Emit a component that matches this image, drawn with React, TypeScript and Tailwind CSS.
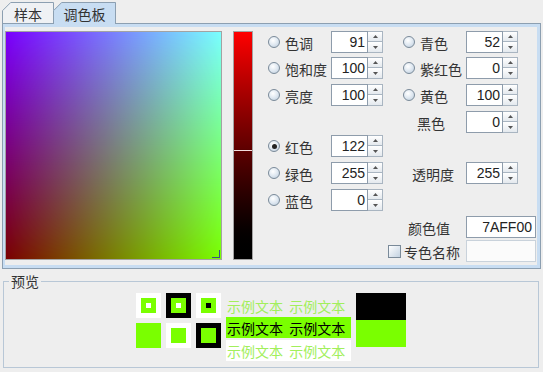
import React from 'react';

function Tab({ label, selected }: { label: string; selected?: boolean }) {
  const w = selected ? 63 : 52;
  const h = selected ? 22 : 21;
  const fill = `M0,${h} L0,8.5 L8.5,0 L${w},0 L${w},${h}Z`;
  const stroke = `M0.5,${h} L0.5,8.7 L8.7,0.5 L${w - 0.5},0.5 L${w - 0.5},${h}`;
  return (
    <div
      className={
        selected
          ? 'relative z-10 -ml-px -mb-px h-[22px] w-[63px] flex items-center justify-center pt-[2px]'
          : 'relative h-[21px] w-[52px] flex items-center justify-center pt-[2px]'
      }
    >
      <svg className="absolute inset-0" width={w} height={h}>
        <path d={fill} fill={selected ? '#c8ddf2' : '#eff1f4'} />
        <path d={stroke} fill="none" stroke="#8c9fb1" />
      </svg>
      <span className="relative">{label}</span>
    </div>
  );
}

function Arrow({ up }: { up?: boolean }) {
  return (
    <svg width="5" height="3" viewBox="0 0 5 3">
      <path d={up ? 'M0 3 L2.5 0 L5 3Z' : 'M0 0 L5 0 L2.5 3Z'} fill="#555" />
    </svg>
  );
}

function Spinner({ value }: { value: string }) {
  return (
    <div className="flex h-[22px] shrink-0">
      <div className="w-[37px] h-full border border-[#8e9cab] bg-white flex items-center justify-end pr-[2px] font-['Liberation_Sans',sans-serif] text-[14px] text-[#222]">
        {value}
      </div>
      <div className="w-[15px] h-full flex flex-col">
        <div className="h-[11px] border border-l-0 border-[#a9b5c1] bg-linear-to-b from-white to-[#e4e9ee] flex items-center justify-center">
          <Arrow up />
        </div>
        <div className="h-[11px] border border-l-0 border-t-0 border-[#a9b5c1] bg-linear-to-b from-white to-[#e4e9ee] flex items-center justify-center">
          <Arrow />
        </div>
      </div>
    </div>
  );
}

function Radio({ checked }: { checked?: boolean }) {
  return (
    <span className="w-[12px] h-[12px] rounded-full border border-[#7a8a99] bg-[radial-gradient(circle_at_40%_35%,#ffffff_0%,#dfe8f1_50%,#b9c9d9_100%)] flex items-center justify-center shrink-0">
      {checked && <span className="w-[5px] h-[5px] rounded-full bg-[#222]" />}
    </span>
  );
}

function RadioRow({ label, value, checked, className }: { label: string; value: string; checked?: boolean; className?: string }) {
  return (
    <div className={`flex items-center h-[22px] ${className ?? ''}`}>
      <Radio checked={checked} />
      <span className="ml-[5px] w-[46px] pt-[1px] whitespace-nowrap">{label}</span>
      <Spinner value={value} />
    </div>
  );
}

function ColorField() {
  return (
    <div className="relative w-[217px] h-[229px] border border-[#a3a3a3] shrink-0">
      <svg width="215" height="227" className="block">
        <defs>
          <linearGradient id="gTop" x1="0" y1="0" x2="1" y2="0">
            <stop offset="0" stopColor="#7a00ff" />
            <stop offset="1" stopColor="#7affff" />
          </linearGradient>
          <linearGradient id="gBot" x1="0" y1="0" x2="1" y2="0">
            <stop offset="0" stopColor="#7a0000" />
            <stop offset="1" stopColor="#7aff00" />
          </linearGradient>
          <linearGradient id="gFade" x1="0" y1="0" x2="0" y2="1">
            <stop offset="0" stopColor="#fff" stopOpacity="0" />
            <stop offset="1" stopColor="#fff" stopOpacity="1" />
          </linearGradient>
          <mask id="mFade">
            <rect width="215" height="227" fill="url(#gFade)" />
          </mask>
        </defs>
        <rect width="215" height="227" fill="url(#gTop)" />
        <rect width="215" height="227" fill="url(#gBot)" mask="url(#mFade)" />
      </svg>
      <div className="absolute right-[1px] bottom-[1px] w-[8px] h-[8px] border-r border-b border-[#3b4f8c]" />
    </div>
  );
}

function Square({ outer, inner, dot }: { outer: string; inner?: string; dot?: string }) {
  return (
    <div className="w-[25px] h-[25px] flex items-center justify-center" style={{ backgroundColor: outer }}>
      {inner && (
        <div className="w-[15px] h-[15px] flex items-center justify-center" style={{ backgroundColor: inner }}>
          {dot && <div className="w-[5px] h-[5px]" style={{ backgroundColor: dot }} />}
        </div>
      )}
    </div>
  );
}

const SAMPLE = '示例文本\u00a0\u00a0示例文本';

export default function App() {
  return (
    <div className="w-[543px] h-[372px] bg-[#eeeeee] overflow-hidden text-[#333333] font-['Noto_Sans_CJK_SC',sans-serif] text-[14px] leading-[18px]">
      {/* tabs */}
      <div className="flex items-end h-[23px] pl-[2px]">
        <Tab label="样本" />
        <Tab label="调色板" selected />
      </div>

      {/* tab content */}
      <div className="ml-[2px] w-[539px] h-[246px] border border-[#8c9fb1] bg-[#c8ddf2] pt-[3px] pl-[2px] pr-[3px] pb-[3px]">
        <div className="h-full bg-[#eeeeee] flex items-start pt-[4px]">
          <ColorField />

          <div className="relative ml-[11px] w-[20px] h-[229px] border border-[#a3a3a3] bg-linear-to-b from-[#ff0000] to-black shrink-0">
            <div className="absolute left-0 right-0 top-[117px] h-px bg-[#5a0000]" />
            <div className="absolute left-0 right-0 top-[118px] h-px bg-[#f3dede]" />
          </div>

          {/* column 1 */}
          <div className="ml-[15px] flex flex-col">
            <RadioRow label="色调" value="91" />
            <RadioRow label="饱和度" value="100" className="mt-[4px]" />
            <RadioRow label="亮度" value="100" className="mt-[5px]" />
            <RadioRow label="红色" value="122" checked className="mt-[29px]" />
            <RadioRow label="绿色" value="255" className="mt-[5px]" />
            <RadioRow label="蓝色" value="0" className="mt-[5px]" />
          </div>

          {/* column 2 */}
          <div className="ml-[5px] w-[148px] flex flex-col">
            <div className="pl-[15px]">
              <RadioRow label="青色" value="52" />
              <RadioRow label="紫红色" value="0" className="mt-[4px]" />
              <RadioRow label="黄色" value="100" className="mt-[5px]" />
            </div>
            <div className="flex items-center h-[22px] mt-[5px]">
              <span className="w-[78px] pl-[29px] pt-[1px]">黑色</span>
              <Spinner value="0" />
            </div>
            <div className="flex items-center h-[22px] mt-[29px]">
              <span className="w-[78px] pl-[24px] pt-[1px]">透明度</span>
              <Spinner value="255" />
            </div>
            <div className="flex items-center h-[22px] mt-[32px]">
              <span className="w-[78px] pl-[20px] pt-[1px]">颜色值</span>
              <div className="w-[70px] h-[22px] border border-[#8e9cab] bg-white flex items-center justify-end pr-[3px] font-['Liberation_Sans',sans-serif] text-[14px] text-[#222]">
                7AFF00
              </div>
            </div>
            <div className="flex items-center h-[22px] mt-[2px]">
              <div className="w-[78px] flex items-center">
                <span className="w-[13px] h-[13px] border border-[#7a8a99] bg-linear-to-br from-white to-[#c3d2e1] shrink-0" />
                <span className="ml-[3px] pt-[1px] whitespace-nowrap">专色名称</span>
              </div>
              <div className="w-[70px] h-[22px] border border-[#c9d2db] bg-[#fbfbfb]" />
            </div>
          </div>
        </div>
      </div>

      {/* preview */}
      <fieldset className="ml-[3px] mt-[3px] w-[536px] h-[96px] border border-[#b8c7d6]">
        <legend className="ml-[5px] px-[2px] leading-[18px]">预览</legend>
        <div className="flex justify-center items-start gap-[5px] pt-[3px]">
          <div className="grid grid-cols-[25px_25px_25px] gap-[5px]">
            <Square outer="#ffffff" inner="#7aff00" dot="#ffffff" />
            <Square outer="#000000" inner="#7aff00" dot="#ffffff" />
            <Square outer="#ffffff" inner="#7aff00" dot="#000000" />
            <Square outer="#7aff00" />
            <Square outer="#ffffff" inner="#7aff00" />
            <Square outer="#000000" inner="#7aff00" />
          </div>

          <div className="w-[125px] mt-[1px] flex flex-col whitespace-nowrap">
            <div className="h-[23px] pl-[1px] pt-[3px] text-[#a2ef5c]">{SAMPLE}</div>
            <div className="h-[21px] pl-[1px] pt-[2px] bg-[#7aff00] text-black">{SAMPLE}</div>
            <div className="h-[21px] mt-[2px] pl-[1px] pt-[2px] bg-white text-[#a2ef5c]">{SAMPLE}</div>
          </div>

          <div className="w-[50px] flex flex-col">
            <div className="h-[27px] bg-black" />
            <div className="h-[27px] bg-[#7aff00]" />
          </div>
        </div>
      </fieldset>
    </div>
  );
}
